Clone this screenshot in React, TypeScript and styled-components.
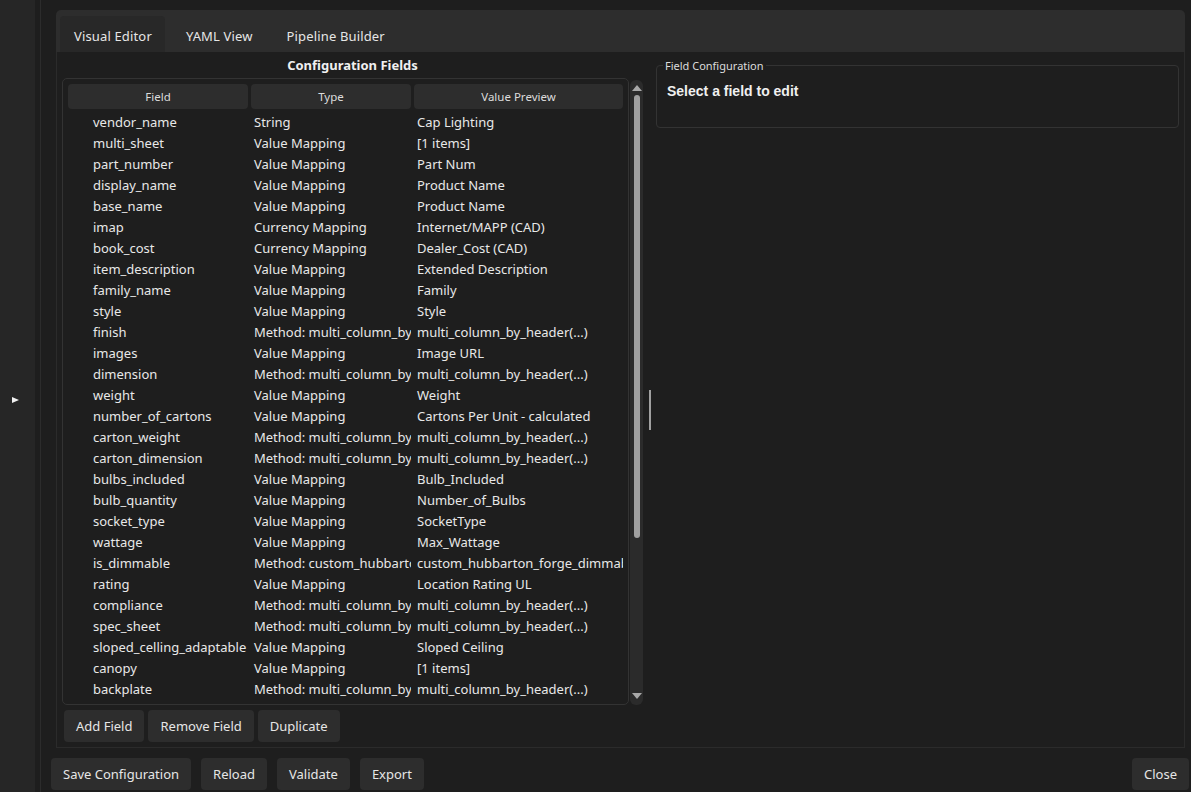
import React from 'react'
import styled, { createGlobalStyle } from 'styled-components'

const GlobalStyle = createGlobalStyle`
  html, body {
    margin: 0;
    padding: 0;
    background: #1e1e1e;
    overflow: hidden;
  }
  * {
    box-sizing: border-box;
  }
`

const fields: [string, string, string][] = [
  ['vendor_name', 'String', 'Cap Lighting'],
  ['multi_sheet', 'Value Mapping', '[1 items]'],
  ['part_number', 'Value Mapping', 'Part Num'],
  ['display_name', 'Value Mapping', 'Product Name'],
  ['base_name', 'Value Mapping', 'Product Name'],
  ['imap', 'Currency Mapping', 'Internet/MAPP (CAD)'],
  ['book_cost', 'Currency Mapping', 'Dealer_Cost (CAD)'],
  ['item_description', 'Value Mapping', 'Extended Description'],
  ['family_name', 'Value Mapping', 'Family'],
  ['style', 'Value Mapping', 'Style'],
  ['finish', 'Method: multi_column_by_header', 'multi_column_by_header(...)'],
  ['images', 'Value Mapping', 'Image URL'],
  ['dimension', 'Method: multi_column_by_header', 'multi_column_by_header(...)'],
  ['weight', 'Value Mapping', 'Weight'],
  ['number_of_cartons', 'Value Mapping', 'Cartons Per Unit - calculated'],
  ['carton_weight', 'Method: multi_column_by_header', 'multi_column_by_header(...)'],
  ['carton_dimension', 'Method: multi_column_by_header', 'multi_column_by_header(...)'],
  ['bulbs_included', 'Value Mapping', 'Bulb_Included'],
  ['bulb_quantity', 'Value Mapping', 'Number_of_Bulbs'],
  ['socket_type', 'Value Mapping', 'SocketType'],
  ['wattage', 'Value Mapping', 'Max_Wattage'],
  ['is_dimmable', 'Method: custom_hubbarton_forge_dimmable', 'custom_hubbarton_forge_dimmable(...)'],
  ['rating', 'Value Mapping', 'Location Rating UL'],
  ['compliance', 'Method: multi_column_by_header', 'multi_column_by_header(...)'],
  ['spec_sheet', 'Method: multi_column_by_header', 'multi_column_by_header(...)'],
  ['sloped_celling_adaptable', 'Value Mapping', 'Sloped Ceiling'],
  ['canopy', 'Value Mapping', '[1 items]'],
  ['backplate', 'Method: multi_column_by_header', 'multi_column_by_header(...)'],
]

const App: React.FC = () => {
  return (
    <>
      <GlobalStyle />
      <StyledWindow>
        <StyledSidebar>
          <StyledArrow />
        </StyledSidebar>
        <StyledDivider />
        <StyledMain>
          <StyledTabWidget>
            <StyledTabBar>
              <StyledTab active>Visual Editor</StyledTab>
              <StyledTab>YAML View</StyledTab>
              <StyledTab>Pipeline Builder</StyledTab>
            </StyledTabBar>
            <StyledPane>
              <StyledFieldsSection>
                <StyledSectionTitle>Configuration Fields</StyledSectionTitle>
                <StyledTableRow>
                  <StyledTableFrame>
                    <StyledHeader>
                      <StyledHeaderCell width={180}>Field</StyledHeaderCell>
                      <StyledHeaderCell width={160}>Type</StyledHeaderCell>
                      <StyledHeaderCell width={209}>Value Preview</StyledHeaderCell>
                    </StyledHeader>
                    <StyledRows>
                      {fields.map(([name, type, value]) => (
                        <StyledRow key={name}>
                          <StyledCell width={180} indent={25}>{name}</StyledCell>
                          <StyledCell width={160} indent={3}>{type}</StyledCell>
                          <StyledCell width={209} indent={3}>{value}</StyledCell>
                        </StyledRow>
                      ))}
                    </StyledRows>
                  </StyledTableFrame>
                  <StyledScrollbar>
                    <StyledScrollArrow />
                    <StyledScrollTrack>
                      <StyledScrollHandle />
                    </StyledScrollTrack>
                    <StyledScrollArrow down />
                  </StyledScrollbar>
                </StyledTableRow>
                <StyledButtonRow>
                  <StyledButton>Add Field</StyledButton>
                  <StyledButton>Remove Field</StyledButton>
                  <StyledButton>Duplicate</StyledButton>
                </StyledButtonRow>
              </StyledFieldsSection>
              <StyledSplitter>
                <StyledSplitterHandle />
              </StyledSplitter>
              <StyledConfigSection>
                <StyledGroupBox>
                  <StyledGroupTitle>Field Configuration</StyledGroupTitle>
                  <StyledPlaceholder>Select a field to edit</StyledPlaceholder>
                </StyledGroupBox>
              </StyledConfigSection>
            </StyledPane>
          </StyledTabWidget>
          <StyledFooter>
            <StyledFooterGroup>
              <StyledFooterButton>Save Configuration</StyledFooterButton>
              <StyledFooterButton>Reload</StyledFooterButton>
              <StyledFooterButton>Validate</StyledFooterButton>
              <StyledFooterButton>Export</StyledFooterButton>
            </StyledFooterGroup>
            <StyledFooterButton>Close</StyledFooterButton>
          </StyledFooter>
        </StyledMain>
      </StyledWindow>
    </>
  )
}

const uiFont = `"Noto Sans", "Open Sans", sans-serif`

const StyledWindow = styled.div`
  display: flex;
  width: 1191px;
  height: 792px;
  background: #1e1e1e;
  color: #e6e6e6;
  font-family: ${uiFont};
  font-size: 13px;
`

const StyledSidebar = styled.div`
  width: 35px;
  background: #262626;
  display: flex;
  align-items: center;
  padding-top: 8px;
  padding-left: 12px;
`

const StyledArrow = styled.div`
  width: 0;
  height: 0;
  border-top: 3px solid transparent;
  border-bottom: 3px solid transparent;
  border-left: 7px solid #f0f0f0;
`

const StyledDivider = styled.div`
  width: 1px;
  margin-left: 5px;
  background: #2c2c2c;
`

const StyledMain = styled.div`
  flex: 1;
  display: flex;
  flex-direction: column;
  padding: 10px 2px 2px 10px;
`

const StyledTabWidget = styled.div`
  flex: 1;
  display: flex;
  flex-direction: column;
  margin-left: 5px;
  margin-right: 4px;
`

const StyledTabBar = styled.div`
  height: 42px;
  background: #2d2d2d;
  border-radius: 5px 5px 0 0;
  display: flex;
  align-items: flex-end;
  padding-left: 4px;
  gap: 7px;
`

const StyledTab = styled.div<{ active?: boolean }>`
  height: 36px;
  padding: 3px 13px 0 14px;
  display: flex;
  align-items: center;
  border-radius: 4px 4px 0 0;
  background: ${props => (props.active ? '#282828' : 'transparent')};
  color: #e6e6e6;
  font-size: 13px;
  letter-spacing: 0.15px;
`

const StyledPane = styled.div`
  flex: 1;
  display: flex;
  border: 1px solid #2b2b2b;
  border-top: none;
  padding: 0 5px 4px 5px;
`

const StyledFieldsSection = styled.div`
  width: 581px;
  display: flex;
  flex-direction: column;
`

const StyledSectionTitle = styled.div`
  height: 26px;
  display: flex;
  align-items: center;
  justify-content: center;
  font-weight: 700;
  font-size: 13px;
  color: #f0f0f0;
`

const StyledTableRow = styled.div`
  display: flex;
  height: 627px;
`

const StyledTableFrame = styled.div`
  width: 567px;
  border: 1px solid #333333;
  border-radius: 5px;
  padding: 5px 5px 0 5px;
  overflow: hidden;
`

const StyledHeader = styled.div`
  display: flex;
  gap: 3px;
  height: 25px;
`

const StyledHeaderCell = styled.div<{ width: number }>`
  width: ${props => props.width}px;
  background: #2d2d2d;
  border-radius: 4px;
  display: flex;
  align-items: center;
  justify-content: center;
  font-size: 11.5px;
  color: #dcdcdc;
`

const StyledRows = styled.div`
  padding-top: 2px;
`

const StyledRow = styled.div`
  display: flex;
  gap: 3px;
  height: 21px;
  align-items: center;
`

const StyledCell = styled.div<{ width: number; indent: number }>`
  width: ${props => props.width}px;
  flex-shrink: 0;
  padding-left: ${props => props.indent}px;
  white-space: nowrap;
  overflow: hidden;
  color: #e8e8e8;
`

const StyledScrollbar = styled.div`
  width: 13px;
  margin-left: 1px;
  margin-top: 2px;
  background: #2b2b2b;
  border-radius: 6px;
  display: flex;
  flex-direction: column;
  align-items: center;
`

const StyledScrollArrow = styled.div<{ down?: boolean }>`
  margin: ${props => (props.down ? '4px 0 6px' : '5px 0 4px')};
  width: 0;
  height: 0;
  border-left: 5px solid transparent;
  border-right: 5px solid transparent;
  ${props =>
    props.down ? 'border-top: 6px solid #a8a8a8;' : 'border-bottom: 6px solid #a8a8a8;'}
`

const StyledScrollTrack = styled.div`
  flex: 1;
  width: 6px;
`

const StyledScrollHandle = styled.div`
  width: 6px;
  height: 443px;
  background: #a0a0a0;
  border-radius: 3px;
`

const StyledButtonRow = styled.div`
  display: flex;
  gap: 4px;
  margin-top: 5px;
  padding-left: 2px;
`

const StyledButton = styled.div`
  height: 32px;
  padding: 0 12px;
  background: #2d2d2d;
  border-radius: 4px;
  display: flex;
  align-items: center;
  font-size: 13px;
  color: #e6e6e6;
`

const StyledSplitter = styled.div`
  width: 14px;
  display: flex;
  align-items: center;
  justify-content: center;
  padding-top: 24px;
`

const StyledSplitterHandle = styled.div`
  width: 2px;
  height: 40px;
  background: #a0a0a0;
`

const StyledConfigSection = styled.div`
  flex: 1;
  padding-top: 13px;
  padding-right: 0;
  margin-left: -1px;
`

const StyledGroupBox = styled.div`
  position: relative;
  height: 63px;
  border: 1px solid #333333;
  border-radius: 4px;
  padding: 17px 10px 0 10px;
`

const StyledGroupTitle = styled.div`
  position: absolute;
  top: -7px;
  left: 6px;
  padding: 0 2px;
  background: #1e1e1e;
  font-size: 11px;
  line-height: 13px;
  color: #dcdcdc;
`

const StyledPlaceholder = styled.div`
  font-family: "Liberation Sans", Arial, sans-serif;
  font-weight: 700;
  font-size: 14px;
  color: #f0f0f0;
`

const StyledFooter = styled.div`
  display: flex;
  justify-content: space-between;
  align-items: center;
  padding-top: 10px;
`

const StyledFooterGroup = styled.div`
  display: flex;
  gap: 10px;
`

const StyledFooterButton = styled.div`
  height: 32px;
  padding: 0 12px;
  background: #2d2d2d;
  border-radius: 4px;
  display: flex;
  align-items: center;
  font-size: 13px;
  color: #e6e6e6;
`

export default App
